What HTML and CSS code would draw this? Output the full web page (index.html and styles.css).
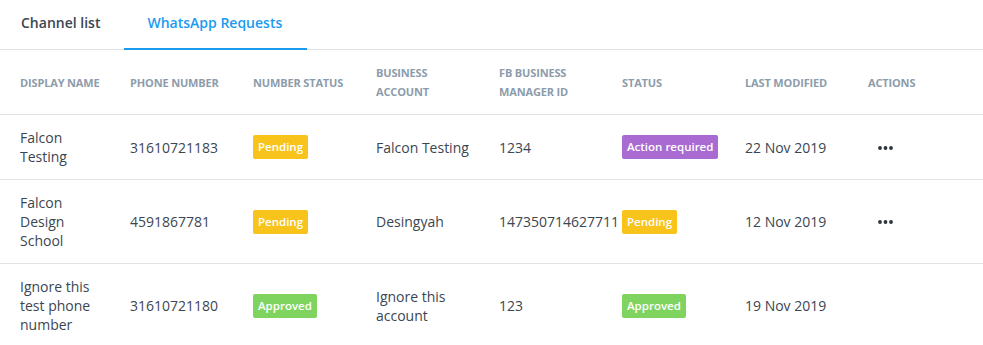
FILE: index.html
```html
<!DOCTYPE html>
<html>
<head>
<meta charset="utf-8">
<link rel="stylesheet" href="styles.css">
</head>
<body>
<nav class="tabs">
  <a class="tab">Channel list</a>
  <a class="tab active">WhatsApp Requests</a>
</nav>
<table class="requests">
  <colgroup>
    <col class="c1"><col class="c"><col class="c"><col class="c"><col class="c"><col class="c"><col class="c"><col class="c8">
  </colgroup>
  <thead>
    <tr>
      <th>Display name</th>
      <th>Phone number</th>
      <th>Number status</th>
      <th>Business account</th>
      <th>FB Business manager ID</th>
      <th>Status</th>
      <th>Last modified</th>
      <th>Actions</th>
    </tr>
  </thead>
  <tbody>
    <tr>
      <td>Falcon Testing</td>
      <td>31610721183</td>
      <td><span class="badge pending">Pending</span></td>
      <td>Falcon Testing</td>
      <td>1234</td>
      <td><span class="badge action">Action required</span></td>
      <td>22 Nov 2019</td>
      <td><svg class="dots" width="15" height="4" viewBox="0 0 15 4"><circle cx="2" cy="2" r="1.9"/><circle cx="7.5" cy="2" r="1.9"/><circle cx="13" cy="2" r="1.9"/></svg></td>
    </tr>
    <tr>
      <td>Falcon Design School</td>
      <td>4591867781</td>
      <td><span class="badge pending">Pending</span></td>
      <td>Desingyah</td>
      <td>147350714627711</td>
      <td><span class="badge pending">Pending</span></td>
      <td>12 Nov 2019</td>
      <td><svg class="dots" width="15" height="4" viewBox="0 0 15 4"><circle cx="2" cy="2" r="1.9"/><circle cx="7.5" cy="2" r="1.9"/><circle cx="13" cy="2" r="1.9"/></svg></td>
    </tr>
    <tr>
      <td>Ignore this test phone number</td>
      <td>31610721180</td>
      <td><span class="badge approved">Approved</span></td>
      <td>Ignore this account</td>
      <td>123</td>
      <td><span class="badge approved">Approved</span></td>
      <td>19 Nov 2019</td>
      <td></td>
    </tr>
  </tbody>
</table>
</body>
</html>
```

FILE: styles.css
```css
html, body {
  margin: 0;
  padding: 0;
  background: #fff;
}
body {
  font-family: "Open Sans", "Liberation Sans", sans-serif;
  color: #3b4651;
  font-size: 14px;
}
.tabs {
  display: flex;
  height: 50px;
  border-bottom: 1px solid #dfe2e5;
  box-sizing: border-box;
}
.tab {
  display: flex;
  align-items: center;
  padding: 0 21px 3px 21px;
  font-size: 14px;
  font-weight: 600;
  color: #3b4651;
  border-bottom: 2px solid transparent;
  margin-bottom: -1px;
}
.tab.active {
  color: #1a9bf0;
  border-bottom-color: #1a9bf0;
  padding: 0 25px 3px 23px;
  margin-left: 3px;
}
.requests {
  width: 983px;
  table-layout: fixed;
  border-collapse: collapse;
}
.c1 { width: 110px; }
.c { width: 123px; }
.c8 { width: 135px; }
th, td {
  text-align: left;
  vertical-align: middle;
  padding: 13px 0 13px 20px;
  line-height: 19px;
  border-bottom: 1px solid #e0e3e6;
}
th {
  font-size: 11px;
  font-weight: 700;
  letter-spacing: -0.15px;
  text-transform: uppercase;
  color: #8d9cab;
}
td {
  font-size: 14px;
  color: #3b4651;
}
.badge {
  display: inline-block;
  font-size: 11.5px;
  font-weight: 600;
  color: #fff;
  line-height: 24px;
  padding: 0 5px;
  border-radius: 2px;
  white-space: nowrap;
  vertical-align: middle;
}
.pending { background: #f8c31b; }
.action { background: #a96bd1; }
.approved { background: #7fd35f; }
.dots {
  display: block;
  margin-left: 10px;
  margin-top: 1px;
  fill: #2c333a;
}
tbody tr:last-child td { border-bottom: none; }
```
